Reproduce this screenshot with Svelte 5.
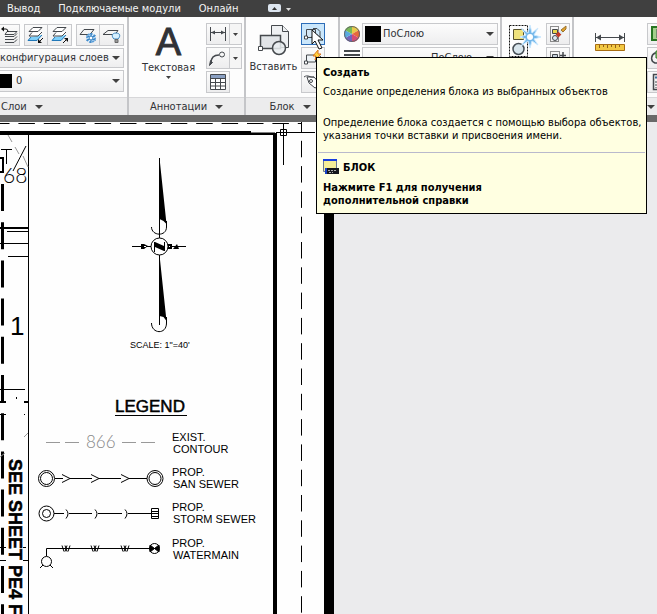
<script lang="ts">
	const menus = ['Вывод', 'Подключаемые модули', 'Онлайн']

	// distances along the pipe where a flow mark is drawn
	const marks = [66, 95, 125]

	const legend = [
		{ y: 442, lines: ['EXIST.', 'CONTOUR'] },
		{ y: 477, lines: ['PROP.', 'SAN SEWER'] },
		{ y: 512, lines: ['PROP.', 'STORM SEWER'] },
		{ y: 548, lines: ['PROP.', 'WATERMAIN'] },
	]

	let layerState = $state('конфигурация слоев')
	let layer = $state('0')
	let color = $state('ПоСлою')
	let lineWeight = $state('ПоСлою')
</script>

{#snippet arrow()}
	<svg class="arrow" width="8" height="4" viewBox="0 0 8 4" aria-hidden="true">
		<path d="M0 0h8L4 4z" fill="#404040" />
	</svg>
{/snippet}

{#snippet smallArrow()}
	<svg width="5" height="3" viewBox="0 0 5 3" aria-hidden="true">
		<path d="M0 0h5L2.500 3z" fill="#404040" />
	</svg>
{/snippet}

{#snippet icon(name: string)}
	<svg class="icon" width="20" height="18" viewBox="0 0 20 18" fill="none" stroke="#44484d" aria-hidden="true">
		{#if name === 'layer-prev'}
			<path d="M7 5.500h10l-3 3H5z" fill="#f4f4f4" />
			<path d="M5 10.500h9l3-3M5 13.500h9l3-3M5 16.500h9l3-3" />
			<path d="M2 3h4q2 0 2 3" stroke="#111" />
			<path d="M1 3l3-2.500v5z" fill="#111" stroke="none" />
		{:else if name === 'layer-down' || name === 'layer-up'}
			<path d="M5 11l-3 3.500h9l5-5.500" fill="#7fd0fa" stroke="#2077b8" />
			<path d="M6 6.500l-3 3.500h9l4-4" fill="#fff" />
			<path d="M7 1.500h9l-4 4H3z" fill="#fff" />
			{#if name === 'layer-down'}
				<path d="M17 12l-4 4" stroke="#111" /><path d="M12 17v-4l4 4z" fill="#111" stroke="none" />
			{:else}
				<path d="M13 17l4-4" stroke="#111" /><path d="M18 12v4l-4-4z" fill="#111" stroke="none" />
			{/if}
		{:else if name === 'freeze'}
			<path d="M6 3.500h10l-4 5H2z" fill="#f5f5f5" />
			<circle cx="13" cy="12" r="4" fill="#e4f3ff" stroke="#5a9fda" stroke-dasharray="2 1" stroke-width="2" />
			<path d="M13 7v10M8.500 9.500l9 5M17.500 9.500l-9 5" stroke="#2677bd" />
			<circle cx="13" cy="12" r="2" fill="#fff" stroke="#2677bd" />
		{:else if name === 'layer-off'}
			<path d="M6 4.500h10l-3 4H1z" fill="#f5f5f5" />
			<path d="M12 13c-3-3-2-6 2-6s5 3 2 6z" fill="#d6f0ff" stroke="#3f87c0" />
			<path d="M13 13.500h3v3h-3z" fill="#999" stroke="#666" />
		{:else if name === 'dimension'}
			<path d="M2.500 2v14M17.500 2v14M3 7.500h14" />
			<path d="M3 7.500l4-2v4zM17 7.500l-4-2v4z" fill="#44484d" stroke="none" />
		{:else if name === 'leader'}
			<path d="M3 14c0-6 3-8 8-8" stroke-width="1.500" />
			<circle cx="14" cy="5.500" r="2.500" /><path d="M1.500 16.500l1-5 2 2z" fill="#44484d" />
		{:else if name === 'table'}
			<path d="M2.500 1.500h15v15h-15z" fill="#fff" />
			<path d="M3 3.500h14" stroke="#8aa0c3" stroke-width="3" />
			<path d="M3 5.500h14M3 9.500h14M3 13h14M7.500 5v11M12.500 5v11" />
		{:else if name === 'create'}
			<path d="M3.500 12.500v-8h9v8z" fill="#d4e7f5" /><path d="M10 3.500h4l3 3v6h-5" />
			<path d="M1.500 11h3v3h-3z" fill="#fff" /><circle cx="12" cy="12" r="3" />
		{:else if name === 'edit-block'}
			<path d="M3.500 13V6h9v7z" fill="#eef3f6" /><path d="M1.500 12h3v3h-3z" fill="#fff" />
			<path d="M12 12l6-5" />
		{:else if name === 'attribute'}
			<path d="M4 4l2 6 6 5 6-3-7-8z" fill="#fff" />
			<circle cx="8" cy="8" r="1.500" /><path d="M1 4c4-3 6 1 10 0" />
		{:else if name === 'group-edit'}
			<path d="M2.500 1.500h8v15h-8z" stroke="#222" stroke-dasharray="1 1" />
			<path d="M4.500 4.500h5v4h-5z" fill="#e8d64a" /><circle cx="7" cy="13" r="2.500" fill="#dfeaf2" />
			<path d="M9 11l3-3" stroke="#c43b27" stroke-width="4" />
			<path d="M12 8l2-2" stroke="#dfe8ee" stroke-width="4" />
			<path d="M13 5l2 2 3-3V1z" fill="#e1a12a" stroke="#9c7430" />
		{:else if name === 'group-add'}
			<path d="M2.500 2.500h9v12h-9z" stroke="#222" stroke-dasharray="1 1" />
			<path d="M4.500 5.500h5v4h-5z" fill="#c7d2dc" /><path d="M12 6.500h6M15 3v7" stroke-width="1.500" />
		{:else if name === 'select-all'}
			<path d="M3 2h15v13H3z" fill="#a3cf8c" stroke="#277522" stroke-width="2" /><path d="M8 4h8v9H8z" fill="#eee" />
		{:else if name === 'quick-select'}
			<path d="M9 4H6c-4 2-5 8 0 10h8" stroke-width="1.500" /><path d="M7 2h9v7H7z" fill="#9fd078" stroke="#277522" />
		{:else if name === 'calculator'}
			<path d="M4.500 1.500h12v15h-12z" fill="#f3f3f3" stroke-width="1.500" />
			<path d="M6 4.500h9" stroke="#3d719d" stroke-width="2" /><path d="M7 8v7M10 8v7M13 8v7" stroke-dasharray="2 1" />
		{/if}
	</svg>
{/snippet}

{#snippet tool(name: string, label: string)}
	<button class="tool" aria-label={label}>{@render icon(name)}</button>
{/snippet}

<div class="app">
	<nav class="menu">
		{#each menus as item}
			<button class="menu-item">{item}</button>
		{/each}
		<button class="minimize" aria-label="Свернуть ленту">
			<svg width="24" height="9" viewBox="0 0 24 9">
				<rect width="13" height="8" rx="2" fill="#dce5ef" />
				<path d="M4 6h5L6.500 3z" fill="#333" /><path d="M18 4h5l-2.500 3z" fill="#ddd" />
			</svg>
		</button>
	</nav>

	<div class="ribbon">
		<section class="panel layers">
			<div class="body rows">
				<div class="row">
					{@render tool('layer-prev', 'Предыдущий слой')}
					<div class="joined">
						{@render tool('layer-down', 'Слой вниз')}
						{@render tool('layer-up', 'Слой вверх')}
					</div>
					<div class="joined">
						{@render tool('freeze', 'Заморозить')}
						{@render tool('layer-off', 'Отключить')}
					</div>
				</div>
				<div class="combo state">
					<select aria-label="Конфигурация слоев" bind:value={layerState}>
						<option>конфигурация слоев</option>
					</select>
					{@render arrow()}
				</div>
				<div class="combo">
					<i class="swatch"></i>
					<select aria-label="Слой" bind:value={layer}><option>0</option></select>
					{@render arrow()}
				</div>
			</div>
			<button class="title start">Слои {@render arrow()}</button>
		</section>

		<section class="panel annotations">
			<div class="body">
				<button class="big">
					<span class="letter" aria-hidden="true">A</span>
					<span>Текстовая</span>
					{@render smallArrow()}
				</button>
				<div class="rows">
					<div class="joined">
						{@render tool('dimension', 'Размер')}
						<button class="drop" aria-label="Виды размеров">{@render smallArrow()}</button>
					</div>
					<div class="joined">
						{@render tool('leader', 'Выноска')}
						<button class="drop" aria-label="Виды выносок">{@render smallArrow()}</button>
					</div>
					{@render tool('table', 'Таблица')}
				</div>
			</div>
			<button class="title">Аннотации {@render arrow()}</button>
		</section>

		<section class="panel blocks">
			<div class="body">
				<button class="big">
					<svg class="big-icon" width="32" height="32" viewBox="0 0 32 32" fill="#eef0f2" stroke="#45494d" aria-hidden="true">
						<path d="M13.500 1.500h11l6 6v16h-17z" /><path d="M24.500 1.500v6h6" />
						<path d="M2.500 11.500h20v13h-20z" fill="#e1e4e7" stroke-width="1.500" />
						<path d="M.5 22.500h4v4h-4z" fill="#fff" />
						<circle cx="21" cy="24" r="6.500" fill="#e9edf0" fill-opacity=".85" stroke-width="1.500" />
					</svg>
					<span>Вставить</span>
				</button>
				<div class="rows">
					<button class="tool active" aria-label="Создать" aria-describedby="hint">
						{@render icon('create')}
						<svg class="pointer" width="14" height="22" viewBox="0 0 14 22" aria-hidden="true">
							<path d="M1 1v14l3-3 4 8 3-1-4-8h5z" fill="#fff" stroke="#111" />
						</svg>
					</button>
					<button class="tool edit" aria-label="Редактировать">
						{@render icon('edit-block')}
						<svg class="spark" width="10" height="10" viewBox="0 0 10 10" aria-hidden="true">
							<path d="M6 0L1 6h3L3 10 9 4H6z" fill="#ffd43f" stroke="#db741d" />
						</svg>
					</button>
					{@render tool('attribute', 'Атрибуты')}
				</div>
			</div>
			<button class="title">Блок {@render arrow()}</button>
		</section>

		<section class="panel properties">
			<div class="body rows">
				<div class="row">
					<svg width="16" height="16" viewBox="0 0 16 16" aria-hidden="true">
						<path d="M8 8V0a8 8 0 0 1 7 4z" fill="#e8c94b" />
						<path d="M8 8l7-4a8 8 0 0 1 0 8z" fill="#e66a3b" />
						<path d="M8 8l7 4a8 8 0 0 1-7 4z" fill="#d64b72" />
						<path d="M8 8v8a8 8 0 0 1-7-4z" fill="#7164bd" />
						<path d="M8 8l-7 4a8 8 0 0 1 0-8z" fill="#58a9df" />
						<path d="M8 8L1 4a8 8 0 0 1 7-4z" fill="#77b957" />
						<circle cx="8" cy="8" r="7.500" fill="none" stroke="#66666a" />
					</svg>
					<div class="combo">
						<i class="swatch"></i>
						<select aria-label="Цвет" bind:value={color}><option>ПоСлою</option></select>
						{@render arrow()}
					</div>
				</div>
				<div class="row">
					<svg width="16" height="16" viewBox="0 0 16 16" aria-hidden="true">
						<path d="M0 1h16M0 5h16M0 11h16" stroke="#45494d" stroke-width="2" />
					</svg>
					<div class="combo weight">
						<select aria-label="Вес линий" bind:value={lineWeight}><option>ПоСлою</option></select>
						{@render arrow()}
					</div>
				</div>
			</div>
			<div class="title"></div>
		</section>

		<section class="panel groups">
			<div class="body">
				<button class="big" aria-label="Группа">
					<svg width="32" height="33" viewBox="0 0 32 33" aria-hidden="true">
						<path d="M.5.5h18v31H.5z" fill="none" stroke="#111" stroke-dasharray="2 1" />
						<path d="M4.500 4.500h10v10h-10z" fill="#efe27c" stroke="#56502b" />
						<circle cx="9.500" cy="24" r="5.500" fill="#d8e5ec" stroke="#454d54" stroke-width="1.500" />
						<path d="M21 0l2 8 6-5-4 7 7 2-7 2 4 6-6-4-2 7-2-7-7 5 5-7-6-2 6-2-5-7 7 5z" fill="#74b7e9" stroke="#cce9ff" />
						<circle cx="21" cy="12" r="3" fill="#fff" />
					</svg>
				</button>
				<div class="rows">
					{@render tool('group-edit', 'Редактировать группу')}
					{@render tool('group-add', 'Добавить в группу')}
				</div>
			</div>
			<div class="title"></div>
		</section>

		<section class="panel utilities">
			<div class="body">
				<button class="big" aria-label="Измерить">
					<svg width="30" height="20" viewBox="0 0 30 20" aria-hidden="true">
						<path d="M.5 1v9M29.500 1v9M1 5.500h28" stroke="#45494d" />
						<path d="M1 5.500l5-3v6zM29 5.500l-5-3v6z" fill="#45494d" />
						<path d="M.5 12.500h29v6H.5z" fill="#f2c844" stroke="#a86d13" />
						<path d="M4.500 13v3M8.500 13v2M12.500 13v3M16.500 13v2M20.500 13v3M24.500 13v2" stroke="#91601b" />
					</svg>
				</button>
			</div>
			<div class="title"></div>
		</section>

		<section class="panel selection">
			<div class="body rows">
				{@render tool('select-all', 'Выбрать все')}
				{@render tool('quick-select', 'Быстрый выбор')}
				{@render tool('calculator', 'Калькулятор')}
			</div>
			<button class="title start" aria-label="Утилиты">{@render arrow()}</button>
		</section>
	</div>

	<main class="canvas">
		<svg class="sheet" width="334" height="492" viewBox="0 122 334 492" fill="none" stroke="#000">
			<rect y="122" width="334" height="492" fill="#fefefe" stroke="none" />
			<path d="M-7 123.500H302" stroke-dasharray="16.500 8.900" />
			<path d="M301.500 115.500V614" stroke-dasharray="16.500 8.800" />
			<path d="M329 122V614" stroke-width="10" />
			<path d="M0 133H275" stroke-width="4" />
			<path d="M275 133V614" stroke-width="4" />
			<path d="M28.500 134V614" />
			<path d="M251 131.500H276" stroke="#fff" stroke-width="2" />
			<path d="M276 132.500H315M283.500 123V165" />
			<path d="M280.500 129.500h6v6h-6z" fill="#fff" /><path d="M280 132.500h7M283.500 129v7" />

			<!-- neighbouring plan -->
			<path d="M2.500 184V614" stroke-width="3" stroke-dasharray="27 11.200" />
			<path d="M0 158h3v14H0" stroke-width="2" />
			<path d="M0 228h28" stroke-width="2" />
			<path d="M7 231.500h21M0 243.500h28M8 256.500h20M0 389.500h25" />
			<path d="M1 149.500h11M6.500 149v15M26 146L13 171" />
			<path d="M8 135l4 7M15 147l4 7M23 156l5 11M24 437l4-4M0 457l5-4" stroke="#999" />
			<path d="M0 402h6M24 402h4" stroke-width="2" />
			<path d="M16.500 397v2M0 414.500h6M24 414.500h1M0 547.500h6M23 547.500h3M0 560.500h6M23 560.500h5" />
			<text class="thin" x="3" y="183" font-size="21">68</text>
			<text x="10" y="335" font-size="26">1</text>
			<text class="bold" transform="translate(9 459) rotate(90)" font-size="18">SEE SHEET PE4 F</text>

			<!-- north arrow -->
			<path d="M159.500 158V238M159.500 255V325" />
			<path d="M159.500 158l7 66-3-3-4-2zM159.500 255l7 66-3-4-4-1z" fill="#000" stroke="none" />
			<path d="M151.500 227c0 9 15 10 15 0v-6M151.500 323c0 11 15 12 15 0v-6" />
			<path d="M132 246.500h54" />
			<circle cx="159.500" cy="246.500" r="8.500" fill="#fff" />
			<path d="M154.500 252v-10M164.500 251v-9" />
			<path d="M155 242l9 4v5l-9-4z" fill="#000" stroke="none" />
			<path d="M141 244h3l4 2-4 3h-3zM168 244h4v5h-4zM173 249l4-5 2 5z" fill="#000" stroke="none" />
			<path d="M144 246.500h2M169 246.500h1" stroke="#fff" />
			<text x="130" y="348" font-size="9">SCALE: 1"=40'</text>

			<text class="heading" x="115" y="412" font-size="17">LEGEND</text>
			<path d="M115 415.500h72" />
			{#each legend as entry}
				<text x="172" y={entry.y - 1} font-size="11">{entry.lines[0]}</text>
				<text x="173" y={entry.y + 11} font-size="11">{entry.lines[1]}</text>
			{/each}

			<path d="M46 442.500h14M65 442.500h14M122 442.500h14M141 442.500h14" stroke="#999" />
			<text class="thin contour" x="86" y="448" font-size="17">866</text>

			<!-- sanitary sewer -->
			<circle cx="46.500" cy="478.500" r="8" /><circle cx="46.500" cy="478.500" r="6" />
			<circle cx="155" cy="478.500" r="8" /><circle cx="155" cy="478.500" r="6" />
			<path d="M55 478.500h8M70 478.500h22M99 478.500h22M129 478.500h18" />
			{#each marks as x}
				<path d="M{x - 4} 474.500l8 4-8 4" />
			{/each}

			<!-- storm sewer -->
			<circle cx="46.500" cy="513.500" r="7.500" /><circle cx="46.500" cy="513.500" r="4" />
			<path d="M54 513.500h10M69 513.500h23M98 513.500h24M128 513.500h23" />
			{#each marks as x}
				<path d="M{x} 509.500q4 4 0 9" />
			{/each}
			<path d="M151.500 508.500h7v10h-7zM151 511.500h8M151 513.500h8M151 516.500h8" />

			<!-- watermain -->
			<path d="M46.500 556v-7.500H150" />
			{#each marks as x}
				<path d="M{x - 4} 545.500l2 6M{x - 1} 545.500l2 6M{x + 2} 551.500l2-6M{x - 1} 551.500l2-6" />
			{/each}
			<circle cx="46.500" cy="561.500" r="5" /><path d="M43 565l-3 3M50 565l3 3" />
			<circle cx="154.500" cy="548.500" r="5" />
			<path d="M150 545l9 7v-7l-9 7z" fill="#000" />
		</svg>
	</main>

	<aside class="tooltip" id="hint" role="tooltip">
		<h2>Создать</h2>
		<p class="summary">Создание определения блока из выбранных объектов</p>
		<p class="details">Определение блока создается с помощью выбора объектов, указания точки вставки и присвоения имени.</p>
		<hr />
		<div class="command">
			<svg width="16" height="16" viewBox="0 0 16 16" aria-hidden="true">
				<path d="M.5.5h13v12H.5z" fill="#f5ed97" stroke="#6a7894" /><path d="M0 1h14" stroke="#173dde" stroke-width="2" />
				<path d="M2 9h14v6H2z" fill="#15161b" /><path d="M2 9h2v6H2z" fill="#153fc7" />
				<path d="M5 11.500h9M6 13.500h4" stroke="#aaa" stroke-dasharray="2 1" />
			</svg>
			<strong>БЛОК</strong>
		</div>
		<p class="help">Нажмите F1 для получения дополнительной справки</p>
	</aside>
</div>

<style>
	:global(body) {
		background: #ebebed;
		font: 11px/14px 'DejaVu Sans Condensed', 'DejaVu Sans', sans-serif;
	}

	.app {
		position: relative;
		display: flex;
		flex-direction: column;
		min-height: 100vh;
		overflow: hidden;
		color: #303236;
	}

	button,
	select {
		box-sizing: border-box;
		margin: 0;
		padding: 0;
		border: 0;
		border-radius: 0;
		background: none;
		color: inherit;
		font: inherit;
	}

	svg {
		display: block;
		flex: none;
	}

	.menu {
		display: flex;
		align-items: center;
		gap: 18px;
		height: 17px;
		padding: 0 7px;
		background: #404040;
	}

	.menu-item {
		height: 16px;
		color: #f4f4f4;
		white-space: nowrap;
	}

	.minimize {
		margin-left: 12px;
	}

	.ribbon {
		display: flex;
		height: 98px;
		background: #fdfdfd;
		border-bottom: 7px solid #696969;
	}

	.panel {
		display: flex;
		flex: none;
		flex-direction: column;
		box-sizing: border-box;
		border-right: 2px solid #c4c5c8;
	}

	.body {
		display: flex;
		flex: 1;
		min-height: 0;
		padding: 6px 2px 0;
	}

	.rows {
		display: flex;
		flex-direction: column;
		gap: 2px;
	}

	.row {
		display: flex;
		gap: 4px;
	}

	.joined {
		display: flex;
	}

	.joined .tool + .tool,
	.joined .drop {
		border-left: 0;
	}

	.tool {
		display: flex;
		align-items: center;
		justify-content: center;
		flex: none;
		width: 24px;
		height: 22px;
		border: 1px solid #c8c9cc;
		background: linear-gradient(#fbfbfb, #ededee);
	}

	.active {
		position: relative;
		border-color: #2d6db8;
		background: #cbe7fb;
	}

	.edit {
		position: relative;
	}

	.pointer {
		position: absolute;
		z-index: 2;
		top: 5px;
		left: 9px;
	}

	.spark {
		position: absolute;
		top: 2px;
		right: 2px;
	}

	.drop {
		display: flex;
		align-items: center;
		justify-content: center;
		width: 12px;
		height: 22px;
		border: 1px solid #c8c9cc;
		background: #f5f5f5;
	}

	.big {
		display: flex;
		flex: 1;
		flex-direction: column;
		align-items: center;
		white-space: nowrap;
	}

	.letter {
		font: 38px/36px 'Liberation Sans', sans-serif;
		-webkit-text-stroke: 1px #303236;
	}

	.title {
		display: flex;
		align-items: center;
		justify-content: center;
		gap: 8px;
		height: 18px;
		background: #ececed;
		border-top: 1px solid #d7d7d9;
		line-height: 16px;
	}

	.start {
		justify-content: flex-start;
		padding-left: 1px;
	}

	.combo {
		display: flex;
		align-items: center;
		flex: 1;
		box-sizing: border-box;
		height: 22px;
		padding-right: 3px;
		border: 1px solid #c8c9cc;
		background: linear-gradient(#fcfcfc, #eeeeef);
	}

	.combo select {
		appearance: none;
		flex: 1;
		min-width: 0;
		height: 18px;
	}

	.swatch {
		flex: none;
		width: 16px;
		height: 16px;
		margin: 0 2px;
		background: #000;
	}

	.layers {
		width: 129px;
	}

	.layers .body {
		padding: 7px 3px 0 0;
	}

	.layers .row > .tool {
		width: 20px;
		border-left: 0;
	}

	.layers .combo {
		flex: none;
		border-left: 0;
	}

	.layers .state {
		height: 20px;
	}

	.layers .swatch {
		width: 12px;
		height: 14px;
		margin: 0 4px 0 0;
	}

	.annotations {
		width: 117px;
	}

	.annotations .big {
		padding-top: 1px;
		gap: 1px;
	}

	.blocks {
		width: 94px;
	}

	.blocks .body {
		padding: 6px 13px 0 0;
	}

	.blocks .big {
		gap: 4px;
		padding-top: 1px;
	}

	.blocks .title {
		padding-right: 4px;
	}

	.properties {
		width: 162px;
	}

	.properties .body {
		padding-left: 4px;
	}

	.properties .row {
		gap: 2px;
		align-items: center;
	}

	.weight select {
		padding-left: 68px;
	}

	.groups {
		width: 72px;
	}

	.groups .big {
		padding-top: 2px;
	}

	.utilities {
		flex: 1;
		border-right: 0;
	}

	.utilities .big {
		padding-top: 9px;
	}

	.selection {
		width: 11px;
		overflow: hidden;
		border-right: 0;
	}

	.selection .body {
		padding: 6px 0 0 1px;
	}

	.canvas {
		flex: 1;
		overflow: hidden;
	}

	.sheet text {
		fill: #000;
		stroke: none;
		font-family: 'Liberation Sans', sans-serif;
	}

	.sheet .thin {
		font-family: Lato, sans-serif;
		font-weight: 300;
	}

	.sheet .contour {
		fill: #888;
	}

	.sheet .bold {
		font-weight: bold;
		stroke: #000;
		stroke-width: 0.500;
	}

	.sheet .heading {
		stroke: #000;
		stroke-width: 0.500;
	}

	/* hangs below the hovered button */
	.tooltip {
		position: absolute;
		top: 57px;
		left: 316px;
		z-index: 1;
		box-sizing: border-box;
		width: 331px;
		padding: 8px 1px 6px;
		border: 1px solid #000;
		background: #ffffe1;
		color: #000;
		line-height: 13px;
	}

	.tooltip h2,
	.tooltip p {
		margin: 0 5px;
	}

	.tooltip h2 {
		font-size: 11px;
		line-height: 13px;
	}

	.tooltip .summary {
		margin-top: 6px;
	}

	.tooltip .details {
		margin: 18px 0 0 5px;
	}

	.tooltip hr {
		height: 1px;
		margin: 10px 0 6px;
		border: 0;
		background: #b9b9cc;
	}

	.command {
		display: flex;
		align-items: center;
		gap: 4px;
		padding: 0 5px;
	}

	.tooltip .help {
		max-width: 180px;
		margin-top: 6px;
		font-weight: bold;
	}
</style>
